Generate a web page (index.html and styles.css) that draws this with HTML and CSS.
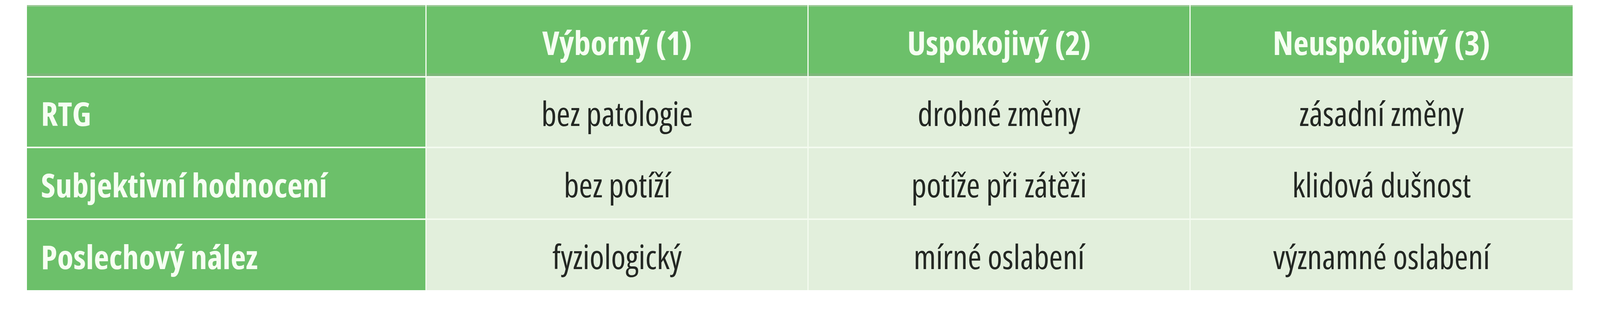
FILE: index.html
```html
<!DOCTYPE html>
<html lang="cs">
<head>
<meta charset="utf-8">
<title>Hodnocení</title>
<link rel="stylesheet" href="styles.css">
</head>
<body>
<div class="page">
  <div class="table">
    <div class="cell head corner"></div>
    <div class="cell head">Výborný (1)</div>
    <div class="cell head">Uspokojivý (2)</div>
    <div class="cell head">Neuspokojivý (3)</div>

    <div class="cell label">RTG</div>
    <div class="cell body">bez patologie</div>
    <div class="cell body">drobné změny</div>
    <div class="cell body">zásadní změny</div>

    <div class="cell label">Subjektivní hodnocení</div>
    <div class="cell body">bez potíží</div>
    <div class="cell body">potíže při zátěži</div>
    <div class="cell body">klidová dušnost</div>

    <div class="cell label">Poslechový nález</div>
    <div class="cell body">fyziologický</div>
    <div class="cell body">mírné oslabení</div>
    <div class="cell body">významné oslabení</div>
  </div>
</div>
</body>
</html>
```

FILE: styles.css
```css
html, body {
  margin: 0;
  padding: 0;
  background: #ffffff;
}

.page {
  padding: 13px 0 0 1.68vw;
}

.table {
  display: grid;
  grid-template-columns: 1263fr 1207fr 1206fr 1210fr;
  grid-template-rows: 182px 177px 180px 180px;
  column-gap: 3px;
  row-gap: 4px;
  width: 96.6vw;
  background: #f4fbf0;
  font-family: "Open Sans", "Liberation Sans", sans-serif;
  font-size: 85px;
}

.cell {
  display: flex;
  align-items: center;
  justify-content: center;
  padding-top: 5px;
  box-sizing: border-box;
  white-space: nowrap;
  font-stretch: 80%;
}

.head {
  background: #6cc06a;
  color: #f6fff2;
  font-weight: bold;
  font-stretch: 75%;
  padding-top: 11px;
  border-top: 4px solid #9cc897;
  border-bottom: 7px solid #7db77a;
}

.label {
  background: #6cc06a;
  color: #f6fff2;
  font-weight: bold;
  font-stretch: 75%;
  justify-content: flex-start;
  padding-left: 36px;
}

.body {
  background: #e2efdc;
  color: #232723;
}
```
